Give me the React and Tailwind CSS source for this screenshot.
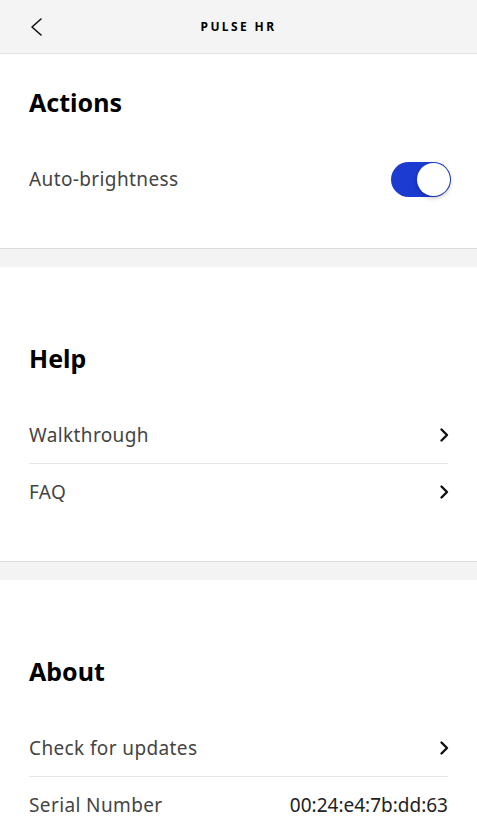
import { useState } from 'react';

const font = { fontFamily: '"Noto Sans", "Open Sans", sans-serif' };

const ChevronRight = () => (
  <svg width="12" height="16" viewBox="0 0 12 16" fill="none" className="-mr-[2px] shrink-0">
    <path d="M3.5 2.5 L9 8 L3.5 13.5" stroke="#111" strokeWidth="2.4" strokeLinecap="round" strokeLinejoin="round" />
  </svg>
);

const Toggle = ({ on, onChange }) => (
  <button
    onClick={() => onChange(!on)}
    className={`relative -mr-[3px] h-[35px] w-[60px] rounded-full ${on ? 'bg-[#1c3bd1]' : 'bg-[#c8c8c8]'}`}
  >
    <span
      className={`absolute top-[1px] h-[33px] w-[33px] rounded-full bg-white shadow-[0_2px_4px_rgba(0,0,0,0.25)] ${
        on ? 'right-[1px]' : 'left-[1px]'
      }`}
    ></span>
  </button>
);

const Row = ({ label, children, divider }) => (
  <div
    className={`flex items-center justify-between ${divider ? 'h-[57px] border-b border-[#e6e6e6]' : 'h-[56px]'}`}
  >
    <span className="text-[19px] tracking-[0.02em] text-[#444]">{label}</span>
    {children}
  </div>
);

const Section = ({ title, top, children }) => (
  <section className={`bg-white pl-[29px] pr-[29px] pb-[41px] ${top}`}>
    <h2 className="h-[34px] text-[25px] font-bold leading-[34px] text-black">{title}</h2>
    <div className="mt-[32px]">{children}</div>
  </section>
);

const Gap = () => <div className="h-[19px] border-t border-[#dcdcdc] bg-[#f3f3f3]"></div>;

export default function App() {
  const [autoBright, setAutoBright] = useState(true);

  return (
    <div className="min-h-screen bg-white" style={font}>
      <header className="relative flex h-[54px] items-center justify-center border-b border-[#e3e3e3] bg-[#f4f4f4]">
        <button className="absolute left-[29px] top-[17px]">
          <svg width="14" height="20" viewBox="0 0 14 20" fill="none">
            <path d="M12 2 L3 10 L12 18" stroke="#111" strokeWidth="1.6" strokeLinecap="round" strokeLinejoin="round" />
          </svg>
        </button>
        <h1 className="text-[12px] font-bold tracking-[0.2em] text-black">PULSE HR</h1>
      </header>

      <Section title="Actions" top="pt-[31px]">
        <Row label="Auto-brightness">
          <Toggle on={autoBright} onChange={setAutoBright} />
        </Row>
      </Section>

      <Gap />

      <Section title="Help" top="pt-[74px]">
        <Row label="Walkthrough" divider>
          <ChevronRight />
        </Row>
        <Row label="FAQ">
          <ChevronRight />
        </Row>
      </Section>

      <Gap />

      <Section title="About" top="pt-[74px]">
        <Row label="Check for updates" divider>
          <ChevronRight />
        </Row>
        <Row label="Serial Number">
          <span className="text-[19px] text-[#222]">00:24:e4:7b:dd:63</span>
        </Row>
      </Section>
    </div>
  );
}
